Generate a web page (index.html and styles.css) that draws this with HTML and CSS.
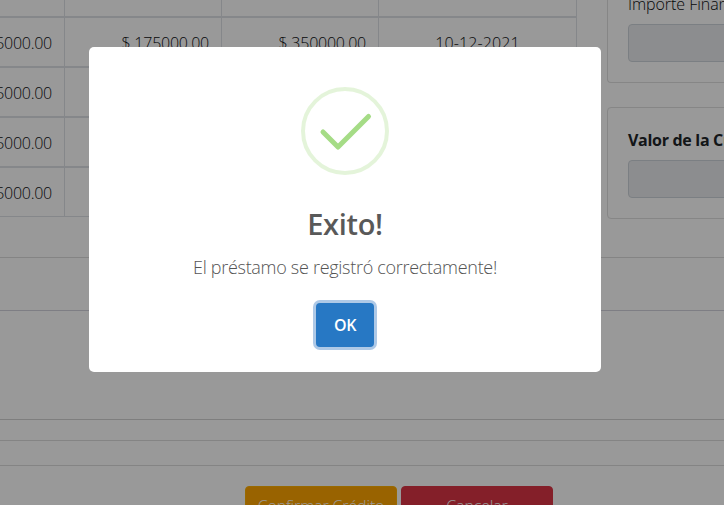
FILE: index.html
```html
<!DOCTYPE html>
<html lang="es">
<head>
<meta charset="utf-8">
<title>Crédito</title>
<link rel="stylesheet" href="styles.css">
</head>
<body>
<main class="page">
  <section class="details">
    <div class="table">
      <div class="row row-first"><span></span><span></span><span></span><span></span></div>
      <div class="row"><span>5000.00</span><span>$ 175000.00</span><span>$ 350000.00</span><span class="date">10-12-2021</span></div>
      <div class="row"><span>5000.00</span><span></span><span></span><span></span></div>
      <div class="row"><span>5000.00</span><span></span><span></span><span></span></div>
      <div class="row"><span>5000.00</span><span></span><span></span><span></span></div>
    </div>
    <aside class="side">
      <div class="card card-top"><label>Importe Financiado</label><div class="field"></div></div>
      <div class="card card-quota"><label>Valor de la Cuota</label><div class="field"></div></div>
    </aside>
  </section>
  <div class="band band-one"></div>
  <div class="band band-two"></div>
  <div class="band band-three"></div>
  <div class="band band-four"></div>
  <footer class="actions">
    <button class="btn confirm">Confirmar Crédito</button>
    <button class="btn cancel">Cancelar</button>
  </footer>
</main>
<div class="overlay">
  <div class="modal">
    <svg class="icon" viewBox="0 0 88 88" width="88" height="88">
      <circle cx="44" cy="44" r="42" fill="none" stroke="#a5dc86" stroke-opacity=".3" stroke-width="4"/>
      <path d="M22 45L37 60L67.5 29.5" fill="none" stroke="#a5dc86" stroke-width="5" stroke-linecap="round" stroke-linejoin="round"/>
    </svg>
    <h2>Exito!</h2>
    <p>El préstamo se registró correctamente!</p>
    <button class="ok">OK</button>
  </div>
</div>
</body>
</html>
```
FILE: styles.css
```css
* { box-sizing: border-box; }
body {
  margin: 0;
  height: 505px;
  overflow: hidden;
  background: #fff;
  color: #212529;
  font: 300 16px/24px "Open Sans", "Noto Sans", sans-serif;
}
.page { height: 505px; overflow: hidden; }
.details {
  display: flex;
  gap: 30px;
  height: 258px;
  border-bottom: 1px solid #dcdcdc;
}
.table { flex: 0 0 577px; color: #0c0e10; }
.row {
  display: grid;
  grid-template-columns: 65px 157px 157px 198px;
  height: 50px;
  border-top: 1px solid #dee2e6;
  border-bottom: 1px solid #dee2e6;
}
.row-first { height: 17px; border-top: 0; }
.row span {
  display: flex;
  align-items: center;
  justify-content: flex-end;
  padding-top: 2px;
  padding-right: 12px;
  border-right: 1px solid #dee2e6;
  letter-spacing: -0.25px;
  white-space: nowrap;
}
.row .date { justify-content: center; padding-right: 0; letter-spacing: 0.1px; }
.side { flex: 0 0 240px; }
.card {
  display: flow-root;
  padding: 20px;
  border: 1px solid #dfdfdf;
  border-radius: 4px;
}
.card-top {
  height: 83px;
  margin-bottom: 24px;
  padding-top: 0;
  border-top: 0;
  border-radius: 0 0 4px 4px;
}
.card-top label { margin-top: -8px; color: #0c0e10; }
.card label { display: block; margin-bottom: 8px; white-space: nowrap; letter-spacing: -0.05px; }
.card-quota { height: 112px; }
.card-quota label { font-weight: 700; letter-spacing: -0.3px; }
.field {
  height: 38px;
  border: 1px solid #ced4da;
  border-radius: 4px;
  background: #e9ecef;
}
.band { border-bottom: 1px solid #dcdcdc; }
.band-one { height: 53px; border-color: #d2d2dc; }
.band-two { height: 109px; border-color: #d2d2d2; }
.band-three { height: 21px; }
.band-four { height: 25px; }
.actions { display: flex; gap: 4px; padding: 20px 0 0 245px; }
.btn {
  width: 152px;
  height: 38px;
  padding: 7px 0 5px;
  border: 1px solid #ffb100;
  border-radius: 4px;
  background: #ffa500;
  color: #fff;
  font: inherit;
  letter-spacing: -0.15px;
  white-space: nowrap;
}
.cancel { border-color: #dc3545; background: #dc3545; }
.overlay {
  position: absolute;
  inset: 0;
  padding: 47px 0 0 89px;
  background: rgba(0, 0, 0, 0.4);
}
.modal {
  display: flex;
  flex-direction: column;
  align-items: center;
  width: 512px;
  height: 325px;
  padding-top: 40px;
  border-radius: 5px;
  background: #fff;
}
.icon { flex: none; }
h2 {
  margin: 29px 0 0;
  color: #595959;
  font-size: 29px;
  font-weight: 600;
  line-height: 40px;
  letter-spacing: -0.3px;
}
p {
  margin: 9px 0 0;
  color: #545454;
  font-size: 18px;
  line-height: 28px;
  white-space: nowrap;
  letter-spacing: -0.29px;
}
.ok {
  width: 58px;
  height: 44px;
  margin-top: 22px;
  padding: 0;
  border: 0;
  border-radius: 4px;
  background: #2778c4;
  box-shadow: 0 0 0 3px #aec9e7;
  color: #fff;
  font: 600 16px/24px "Open Sans", "Noto Sans", sans-serif;
  letter-spacing: -0.5px;
}
```
